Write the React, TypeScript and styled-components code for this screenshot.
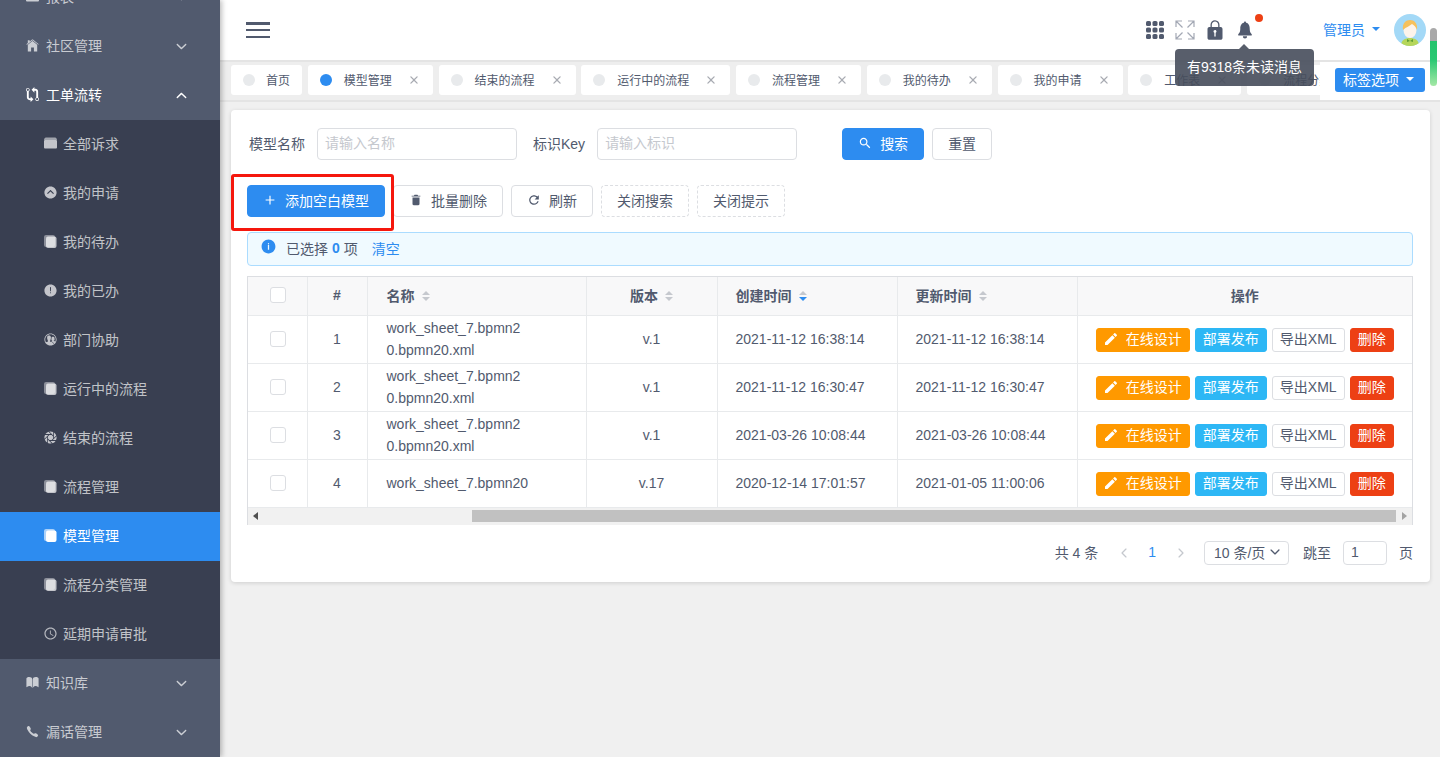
import React from 'react';
import styled, { createGlobalStyle } from 'styled-components';
import {
  IoIosAlert, IoIosAperture, IoIosArrowDropupCircle, IoIosBook,
  IoIosCall, IoIosClose, IoIosContacts, IoIosHome,
  IoIosInformationCircle, IoIosLock, IoIosNotifications,
  IoIosArrowBack, IoIosArrowDown, IoIosArrowForward, IoIosArrowUp,
  IoMdAdd, IoMdArrowDropdown, IoMdGitCompare, IoMdRefresh, IoMdSearch, IoMdTime, IoMdTrash,
} from 'react-icons/io';
import { MdEdit } from 'react-icons/md';

const GlobalStyle = createGlobalStyle`
  html, body { margin: 0; height: 100%; overflow: hidden; }
  body {
    font-family: "Liberation Sans", "Noto Sans CJK SC", sans-serif;
    font-size: 14px;
    color: #515a6e;
  }
  * { box-sizing: border-box; }
`;

const Layout = styled.div`
  display: flex;
  height: 757px;
  overflow: hidden;
  background: #f0f0f0;
  position: relative;
`;

/* sidebar */
const Sidebar = styled.nav`
  width: 220px;
  flex: none;
  background: #515a6e;
  overflow: hidden;
  box-shadow: 2px 0 5px rgba(0, 0, 0, 0.25);
  position: relative;
  z-index: 5;
`;
const MenuList = styled.div`
  margin-top: -27px;
`;
const MenuItem = styled.div<{ $open?: boolean }>`
  height: 49px;
  display: flex;
  align-items: center;
  padding: 0 31px 4px 25px;
  color: ${(p) => (p.$open ? '#fff' : 'rgba(255,255,255,.7)')};
  > svg { font-size: 15px; margin: 2px 6px 0 0; flex: none; }
`;
const Chevron = styled.span`
  margin: 3px 0 0 auto;
  display: flex;
  font-size: 15px;
`;
const SubMenu = styled.div`
  background: #393f51;
`;
const SubItem = styled.div<{ $active?: boolean }>`
  height: 49px;
  display: flex;
  align-items: center;
  padding: 0 0 4px 43px;
  color: ${(p) => (p.$active ? '#fff' : 'rgba(255,255,255,.7)')};
  background: ${(p) => (p.$active ? '#2d8cf0' : 'transparent')};
  svg { font-size: 15px; margin: 2px 5px 0 0; flex: none; }
`;

/* top */
const Main = styled.main`
  flex: 1;
  min-width: 0;
  display: flex;
  flex-direction: column;
`;
const Header = styled.header`
  height: 60px;
  flex: none;
  background: #fff;
  display: flex;
  align-items: center;
  padding: 0 14px 0 26px;
`;
const Burger = styled.div`
  width: 24px;
  height: 16px;
  display: flex;
  flex-direction: column;
  justify-content: space-between;
  span { height: 2.5px; background: #515a6e; }
`;
const HeaderTools = styled.div`
  margin-left: auto;
  display: flex;
  align-items: center;
`;
const ToolIcon = styled.span<{ $size: number; $gap: number }>`
  display: flex;
  position: relative;
  font-size: ${(p) => p.$size}px;
  margin-right: ${(p) => p.$gap}px;
  color: #515a6e;
`;
const RedDot = styled.i`
  position: absolute;
  top: -5px;
  right: -7px;
  width: 8px;
  height: 8px;
  border-radius: 50%;
  background: #ed4014;
`;
const UserName = styled.span`
  display: flex;
  align-items: center;
  color: #2d8cf0;
  margin: 0 10px 0 0;
  padding-bottom: 2px;
  svg { margin-left: 3px; font-size: 16px; }
`;
const Tooltip = styled.div`
  position: absolute;
  left: 1175px;
  top: 49px;
  width: 139px;
  height: 37px;
  line-height: 37px;
  text-align: center;
  border-radius: 4px;
  color: #fff;
  background: rgba(70, 76, 91, 0.9);
  z-index: 8;
  &::before {
    content: '';
    position: absolute;
    left: 64px;
    top: -5px;
    border: 5px solid transparent;
    border-top: 0;
    border-bottom-color: rgba(70, 76, 91, 0.9);
  }
`;
const ScrollThumb = styled.div`
  position: absolute;
  right: 3px;
  top: 28px;
  width: 7px;
  height: 58px;
  border-radius: 4px;
  background: linear-gradient(#a9a9a9 0, #a9a9a9 22%, #25c46d 23%, #2bc873 55%, #a5e8a6 100%);
  z-index: 9;
`;

/* tags */
const TagBar = styled.div`
  height: 42px;
  flex: none;
  display: flex;
  gap: 5.75px;
  padding: 3px 0 5px 11px;
  background: #eee;
  border-top: 2px solid #e4e4e4;
  border-bottom: 2px solid #e4e4e4;
  margin-bottom: 8px;
  position: relative;
  overflow: hidden;
`;
const Tag = styled.div`
  flex: none;
  height: 30px;
  display: flex;
  align-items: center;
  padding: 0 12px 2px;
  background: #fff;
  border-radius: 3px;
  font-size: 12px;
`;
const TagDot = styled.i<{ $on?: boolean; $tight?: boolean }>`
  width: 12px;
  height: 12px;
  border-radius: 50%;
  margin: 2px ${(p) => (p.$tight ? 11 : 12)}px 0 0;
  background: ${(p) => (p.$on ? '#2d8cf0' : '#e8eaec')};
`;
const TagClose = styled.span`
  display: flex;
  margin: 2px -3px 0 12px;
  font-size: 20px;
  color: #a8abb2;
`;
const TagOptions = styled.div`
  position: absolute;
  top: 0;
  right: 0;
  bottom: 0;
  width: 120px;
  background: #fff;
  display: flex;
  align-items: center;
  padding: 0 0 3px 15px;
`;
const OptionsButton = styled.div`
  width: 90px;
  height: 24px;
  display: flex;
  align-items: center;
  padding: 0 0 2px 8px;
  background: #2d8cf0;
  color: #fff;
  border-radius: 3px;
  svg { margin-left: 3px; font-size: 16px; }
`;

/* card */
const Card = styled.section`
  margin: 0 10px 0 11px;
  padding: 18px 17px 17px 16px;
  background: #fff;
  border-radius: 4px;
  box-shadow: 0 1px 4px rgba(0, 0, 0, 0.14);
`;
const FilterRow = styled.div`
  display: flex;
  align-items: center;
  padding-left: 2px;
  margin-bottom: 25px;
`;
const FieldLabel = styled.label`
  margin-right: 12px;
  padding-bottom: 2px;
`;
const TextBox = styled.div`
  width: 200px;
  height: 32px;
  line-height: 28px;
  padding: 0 7px;
  margin-right: 16px;
  border: 1px solid #dcdee2;
  border-radius: 4px;
  color: #c5c8ce;
`;
const Button = styled.button<{ $kind?: 'primary' | 'default' | 'dashed'; $wide?: number }>`
  height: 32px;
  width: ${(p) => p.$wide}px;
  display: inline-flex;
  align-items: center;
  justify-content: center;
  font: inherit;
  padding: 0 0 2px;
  border-radius: 4px;
  color: ${(p) => (p.$kind === 'primary' ? '#fff' : '#515a6e')};
  background: ${(p) => (p.$kind === 'primary' ? '#2d8cf0' : '#fff')};
  border: 1px ${(p) => (p.$kind === 'dashed' ? 'dashed' : 'solid')} ${(p) => (p.$kind === 'primary' ? '#2d8cf0' : '#dcdee2')};
  svg { margin-right: 8px; font-size: 14px; }
`;
const SearchButtons = styled.div`
  display: flex;
  gap: 8px;
  margin-left: 29px;
`;
const Toolbar = styled.div`
  display: flex;
  gap: 8px;
  margin-bottom: 15px;
  position: relative;
`;
const RedFrame = styled.div`
  position: absolute;
  left: -16px;
  top: -11px;
  width: 163px;
  height: 57px;
  border: 3px solid #f5170d;
  border-radius: 3px;
`;
const Alert = styled.div`
  height: 34px;
  display: flex;
  align-items: center;
  padding: 0 0 2px 12px;
  margin-bottom: 10px;
  background: #f0faff;
  border: 1px solid #abdcff;
  border-radius: 4px;
  svg { color: #2d8cf0; font-size: 17px; margin: -3px 9px 0 0; }
  b { color: #2d8cf0; margin: 0 4px; }
  a { color: #2d8cf0; margin-left: 14px; }
`;

/* table */
const TableWrap = styled.div`
  border: 1px solid #dcdee2;
  border-bottom: 0;
`;
const Table = styled.table`
  width: 100%;
  table-layout: fixed;
  border-collapse: collapse;
`;
const Th = styled.th<{ $w?: number; $align?: string; $fixed?: 'left' | 'right' }>`
  width: ${(p) => (p.$w ? `${p.$w}px` : 'auto')};
  height: 38px;
  padding: 0 18px 2px;
  background: #f8f8f9;
  font-weight: 700;
  text-align: ${(p) => p.$align || 'left'};
  border-right: 1px solid #e8eaec;
  border-bottom: 1px solid #e8eaec;
  position: relative;
  ${(p) => p.$fixed === 'left' && 'box-shadow: 2px 0 6px -2px rgba(0,0,0,.2); z-index: 1; border-right: 0; padding-left: 19px;'}
  ${(p) => p.$fixed === 'right' && 'box-shadow: -2px 0 6px -2px rgba(0,0,0,.2); z-index: 1; border-right: 0;'}
`;
const Td = styled.td<{ $align?: string; $fixed?: 'left' | 'right' }>`
  height: 48px;
  padding: 0 18px;
  line-height: 22px;
  word-break: break-all;
  text-align: ${(p) => p.$align || 'center'};
  border-right: 1px solid #e8eaec;
  border-bottom: 1px solid #e8eaec;
  background: #fff;
  position: relative;
  ${(p) => p.$fixed === 'left' && 'box-shadow: 2px 0 6px -2px rgba(0,0,0,.2); z-index: 1; border-right: 0; padding-left: 19px;'}
  ${(p) => p.$fixed === 'right' && 'box-shadow: -2px 0 6px -2px rgba(0,0,0,.2); z-index: 1; border-right: 0; padding: 0;'}
`;
const Check = styled.span`
  display: block;
  width: 16px;
  height: 16px;
  margin: 0 auto;
  position: relative;
  left: 1px;
  border: 1px solid #dcdee2;
  border-radius: 3px;
  background: #fff;
`;
const SortWrap = styled.span`
  display: inline-flex;
  flex-direction: column;
  gap: 2px;
  margin: -2px 0 0 7px;
  vertical-align: middle;
`;
const SortArrow = styled.i<{ $down?: boolean; $on?: boolean }>`
  width: 0;
  height: 0;
  border-left: 4px solid transparent;
  border-right: 4px solid transparent;
  ${(p) => (p.$down ? 'border-top' : 'border-bottom')}: 4px solid ${(p) => (p.$on ? '#2d8cf0' : '#c5c8ce')};
`;
const Actions = styled.div`
  display: flex;
  justify-content: center;
  gap: 5px;
  margin-top: 1px;
`;
const ActionButton = styled.span<{ $bg?: string }>`
  height: 24px;
  display: inline-flex;
  align-items: center;
  padding: 0 7px 1px;
  border-radius: 3px;
  white-space: nowrap;
  color: ${(p) => (p.$bg ? '#fff' : '#515a6e')};
  background: ${(p) => p.$bg || '#fff'};
  border: 1px solid ${(p) => p.$bg || '#dcdee2'};
  svg { font-size: 16px; margin: 0 7px 0 -1px; }
`;
const HScroll = styled.div`
  height: 17px;
  display: flex;
  align-items: center;
  background: #f1f1f1;
  padding: 0 5px;
`;
const ScrollArrow = styled.i<{ $right?: boolean }>`
  width: 0;
  height: 0;
  border-top: 4px solid transparent;
  border-bottom: 4px solid transparent;
  ${(p) => (p.$right ? 'border-left: 5px solid #a3a3a3; margin-left: 6px;' : 'border-right: 5px solid #505050; margin-right: 214px;')}
`;
const ScrollBarThumb = styled.div`
  flex: 1;
  height: 12px;
  background: #c1c1c1;
`;

/* pager */
const Pager = styled.div`
  display: flex;
  justify-content: flex-end;
  align-items: center;
  height: 24px;
  margin-top: 16px;
`;
const PagerText = styled.span`
  padding-bottom: 2px;
`;
const PagerArrow = styled.span<{ $gap?: number }>`
  display: flex;
  color: #c5c8ce;
  font-size: 14px;
  margin-left: ${(p) => p.$gap || 0}px;
`;
const PageNo = styled.span`
  color: #2d8cf0;
  margin: 0 18px 0 17px;
  padding-bottom: 2px;
`;
const SizeSelect = styled.div`
  width: 85px;
  height: 24px;
  display: flex;
  align-items: center;
  justify-content: space-between;
  padding: 0 6px 2px 9px;
  margin: 0 14px 0 16px;
  border: 1px solid #dcdee2;
  border-radius: 4px;
  white-space: nowrap;
`;
const JumpBox = styled.div`
  width: 44px;
  height: 24px;
  line-height: 21px;
  padding-left: 7px;
  margin: 0 12px 0 12px;
  border: 1px solid #dcdee2;
  border-radius: 4px;
`;

const GridIcon = () => (
  <svg width="18" height="18" viewBox="0 0 18 18" fill="currentColor">
    {[0, 6.5, 13].map((y) =>
      [0, 6.5, 13].map((x) => <rect key={`${x}-${y}`} x={x} y={y} width="5" height="5" rx="1.6" />),
    )}
  </svg>
);

const ExpandIcon = () => (
  <svg width="20" height="20" viewBox="0 0 20 20" fill="none" stroke="#a3a8b4" strokeWidth="1.2">
    <path d="M1 7V1h6M13 1h6v6M19 13v6h-6M7 19H1v-6M1 1l6.5 6.5M19 1l-6.5 6.5M19 19l-6.5-6.5M1 19l6.5-6.5" />
  </svg>
);

const FilingIcon = () => (
  <svg width="15" height="15" viewBox="0 0 15 15" fill="currentColor">
    <path d="M3 1.5h9c.6 0 1.2.4 1.5 1l.6 1.5H.9l.6-1.5c.3-.6.9-1 1.5-1z" opacity=".75" />
    <rect x="1" y="4" width="13" height="8.5" rx="1" />
  </svg>
);

const CopyIcon = () => (
  <svg width="15" height="15" viewBox="0 0 15 15" fill="currentColor">
    <rect x="1" y="1" width="11" height="12" rx="2" opacity=".6" />
    <rect x="3" y="2.5" width="10.5" height="11.5" rx="2" />
  </svg>
);

const Avatar = () => (
  <svg width="32" height="32" viewBox="0 0 32 32">
    <defs>
      <clipPath id="avatar-clip"><circle cx="16" cy="16" r="16" /></clipPath>
    </defs>
    <g clipPath="url(#avatar-clip)">
      <rect width="32" height="32" fill="#a3d9f7" />
      <path d="M7 32c0-6 4-8 9-8s9 2 9 8z" fill="#b5d65a" />
      <path d="M13 25l3 2 3-2v3l-3-1-3 1z" fill="#5f9e34" />
      <ellipse cx="16" cy="16" rx="6.5" ry="8" fill="#fdf3ea" />
      <path d="M9 16c-1-7 3-10 7-10s8 3 7 10c-1-3-3-5-5-6-2 2-6 3-9 6z" fill="#f6c15c" />
    </g>
  </svg>
);

const subMenus = [
  { label: '全部诉求', icon: <FilingIcon /> },
  { label: '我的申请', icon: <IoIosArrowDropupCircle /> },
  { label: '我的待办', icon: <CopyIcon /> },
  { label: '我的已办', icon: <IoIosAlert /> },
  { label: '部门协助', icon: <IoIosContacts /> },
  { label: '运行中的流程', icon: <CopyIcon /> },
  { label: '结束的流程', icon: <IoIosAperture /> },
  { label: '流程管理', icon: <CopyIcon /> },
  { label: '模型管理', icon: <CopyIcon />, active: true },
  { label: '流程分类管理', icon: <CopyIcon /> },
  { label: '延期申请审批', icon: <IoMdTime /> },
];

const tags = [
  { label: '首页', fixed: true },
  { label: '模型管理', on: true },
  { label: '结束的流程' },
  { label: '运行中的流程' },
  { label: '流程管理' },
  { label: '我的待办' },
  { label: '我的申请' },
  { label: '工作表' },
  { label: '流程分类管理' },
];

const rows = [
  { no: 1, name: 'work_sheet_7.bpmn20.bpmn20.xml', ver: 'v.1', created: '2021-11-12 16:38:14', updated: '2021-11-12 16:38:14' },
  { no: 2, name: 'work_sheet_7.bpmn20.bpmn20.xml', ver: 'v.1', created: '2021-11-12 16:30:47', updated: '2021-11-12 16:30:47' },
  { no: 3, name: 'work_sheet_7.bpmn20.bpmn20.xml', ver: 'v.1', created: '2021-03-26 10:08:44', updated: '2021-03-26 10:08:44' },
  { no: 4, name: 'work_sheet_7.bpmn20', ver: 'v.17', created: '2020-12-14 17:01:57', updated: '2021-01-05 11:00:06' },
];

const Sort = ({ down }: { down?: boolean }) => (
  <SortWrap>
    <SortArrow />
    <SortArrow $down $on={down} />
  </SortWrap>
);

export default function App() {
  return (
    <>
      <GlobalStyle />
      <Layout>
        <Sidebar>
          <MenuList>
            <MenuItem><FilingIcon />报表<Chevron><IoIosArrowDown /></Chevron></MenuItem>
            <MenuItem><IoIosHome />社区管理<Chevron><IoIosArrowDown /></Chevron></MenuItem>
            <MenuItem $open><IoMdGitCompare />工单流转<Chevron><IoIosArrowUp /></Chevron></MenuItem>
            <SubMenu>
              {subMenus.map((m) => (
                <SubItem key={m.label} $active={m.active}>{m.icon}{m.label}</SubItem>
              ))}
            </SubMenu>
            <MenuItem><IoIosBook />知识库<Chevron><IoIosArrowDown /></Chevron></MenuItem>
            <MenuItem><IoIosCall />漏话管理<Chevron><IoIosArrowDown /></Chevron></MenuItem>
          </MenuList>
        </Sidebar>

        <Main>
          <Header>
            <Burger><span /><span /><span /></Burger>
            <HeaderTools>
              <ToolIcon $size={18} $gap={11}><GridIcon /></ToolIcon>
              <ToolIcon $size={20} $gap={8}><ExpandIcon /></ToolIcon>
              <ToolIcon $size={24} $gap={7}><IoIosLock /></ToolIcon>
              <ToolIcon $size={22} $gap={67}><IoIosNotifications /><RedDot /></ToolIcon>
              <UserName>管理员<IoMdArrowDropdown /></UserName>
              <Avatar />
            </HeaderTools>
          </Header>

          <TagBar>
            {tags.map((t) => (
              <Tag key={t.label}>
                <TagDot $on={t.on} $tight={t.fixed} />
                {t.label}
                {!t.fixed && <TagClose><IoIosClose /></TagClose>}
              </Tag>
            ))}
            <TagOptions>
              <OptionsButton>标签选项<IoMdArrowDropdown /></OptionsButton>
            </TagOptions>
          </TagBar>

          <Card>
            <FilterRow>
              <FieldLabel>模型名称</FieldLabel>
              <TextBox>请输入名称</TextBox>
              <FieldLabel>标识Key</FieldLabel>
              <TextBox>请输入标识</TextBox>
              <SearchButtons>
                <Button $kind="primary" $wide={82}><IoMdSearch />搜索</Button>
                <Button $wide={60}>重置</Button>
              </SearchButtons>
            </FilterRow>

            <Toolbar>
              <Button $kind="primary" $wide={138}><IoMdAdd />添加空白模型</Button>
              <Button $wide={110}><IoMdTrash />批量删除</Button>
              <Button $wide={82}><IoMdRefresh />刷新</Button>
              <Button $kind="dashed" $wide={88}>关闭搜索</Button>
              <Button $kind="dashed" $wide={88}>关闭提示</Button>
              <RedFrame />
            </Toolbar>

            <Alert>
              <IoIosInformationCircle />
              已选择<b>0</b>项<a>清空</a>
            </Alert>

            <TableWrap>
              <Table>
                <thead>
                  <tr>
                    <Th $w={59}><Check /></Th>
                    <Th $w={60} $align="center">#</Th>
                    <Th $w={181} $fixed="left">名称<Sort /></Th>
                    <Th $w={38} />
                    <Th $w={131} $align="center">版本<Sort /></Th>
                    <Th $w={180}>创建时间<Sort down /></Th>
                    <Th $w={180}>更新时间<Sort /></Th>
                    <Th $align="center" $fixed="right">操作</Th>
                  </tr>
                </thead>
                <tbody>
                  {rows.map((r) => (
                    <tr key={r.no}>
                      <Td><Check /></Td>
                      <Td>{r.no}</Td>
                      <Td $align="left" $fixed="left">{r.name}</Td>
                      <Td />
                      <Td>{r.ver}</Td>
                      <Td $align="left">{r.created}</Td>
                      <Td $align="left">{r.updated}</Td>
                      <Td $fixed="right">
                        <Actions>
                          <ActionButton $bg="#ff9900"><MdEdit />在线设计</ActionButton>
                          <ActionButton $bg="#2db7f5">部署发布</ActionButton>
                          <ActionButton>导出XML</ActionButton>
                          <ActionButton $bg="#ed4014">删除</ActionButton>
                        </Actions>
                      </Td>
                    </tr>
                  ))}
                </tbody>
              </Table>
              <HScroll>
                <ScrollArrow />
                <ScrollBarThumb />
                <ScrollArrow $right />
              </HScroll>
            </TableWrap>

            <Pager>
              <PagerText>共 4 条</PagerText>
              <PagerArrow $gap={19}><IoIosArrowBack /></PagerArrow>
              <PageNo>1</PageNo>
              <PagerArrow><IoIosArrowForward /></PagerArrow>
              <SizeSelect>10 条/页<IoIosArrowDown /></SizeSelect>
              <PagerText>跳至</PagerText>
              <JumpBox>1</JumpBox>
              <PagerText>页</PagerText>
            </Pager>
          </Card>
        </Main>

        <Tooltip>有9318条未读消息</Tooltip>
        <ScrollThumb />
      </Layout>
    </>
  );
}
